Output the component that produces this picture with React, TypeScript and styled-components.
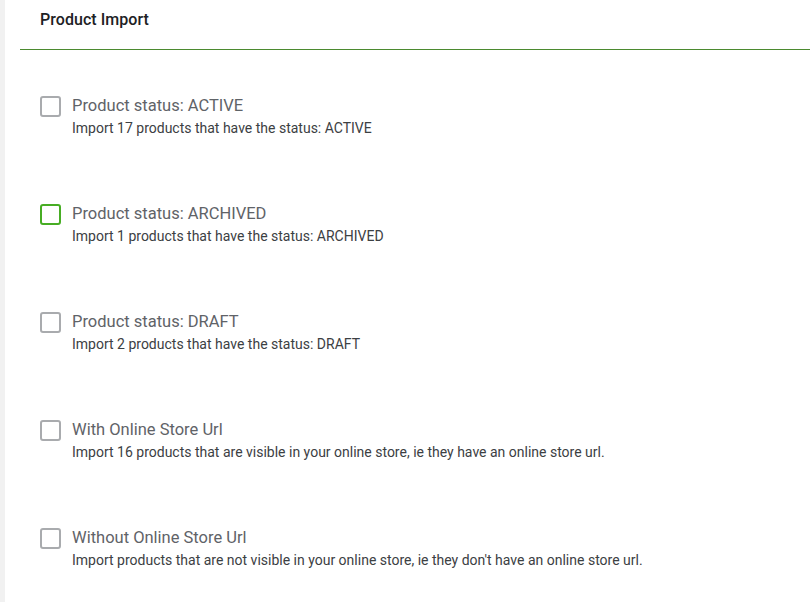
import React from "react";
import styled, { createGlobalStyle } from "styled-components";

const Global = createGlobalStyle`
  html, body { margin: 0; padding: 0; background: #fff; }
  body { font-family: Roboto, "Liberation Sans", Arial, sans-serif; }
`;

const Page = styled.div`
  display: flex;
  min-height: 602px;
`;

const SideStrip = styled.div`
  width: 5px;
  flex: 0 0 5px;
  background: #f1f1f1;
`;

const Main = styled.div`
  flex: 1;
  display: flex;
  flex-direction: column;
`;

const Header = styled.div`
  height: 50px;
  display: flex;
  align-items: center;
  padding-bottom: 10px;
  box-sizing: border-box;
  border-bottom: 1px solid #4b8a2f;
  margin-left: 15px;
  padding-left: 20px;
`;

const Title = styled.h1`
  margin: 0;
  font-size: 16px;
  font-weight: 500;
  color: #202124;
  line-height: 20px;
  letter-spacing: 0.05px;
`;

const List = styled.div`
  display: flex;
  flex-direction: column;
  gap: 67px;
  padding: 46px 0 0 35px;
`;

const Row = styled.label`
  display: flex;
  align-items: flex-start;
  gap: 11px;
  cursor: pointer;
`;

const Box = styled.span<{ $focused?: boolean }>`
  display: block;
  width: 21px;
  height: 21px;
  box-sizing: border-box;
  border: 2px solid ${(p) => (p.$focused ? "#47ad24" : "#a9abae")};
  border-radius: 3px;
  flex: 0 0 auto;
`;

const TextCol = styled.div`
  display: flex;
  flex-direction: column;
`;

const Label = styled.div`
  font-size: 16.5px;
  line-height: 20px;
  color: #5f6368;
`;

const Desc = styled.div`
  font-size: 14px;
  line-height: 18px;
  margin-top: 3px;
  color: #3c4043;
`;

const options = [
  { label: "Product status: ACTIVE", desc: "Import 17 products that have the status: ACTIVE" },
  { label: "Product status: ARCHIVED", desc: "Import 1 products that have the status: ARCHIVED", focused: true },
  { label: "Product status: DRAFT", desc: "Import 2 products that have the status: DRAFT" },
  { label: "With Online Store Url", desc: "Import 16 products that are visible in your online store, ie they have an online store url." },
  { label: "Without Online Store Url", desc: "Import products that are not visible in your online store, ie they don't have an online store url." },
];

export default function App() {
  return (
    <>
      <Global />
      <Page>
        <SideStrip />
        <Main>
          <Header>
            <Title>Product Import</Title>
          </Header>
          <List>
            {options.map((o) => (
              <Row key={o.label}>
                <Box $focused={o.focused} />
                <TextCol>
                  <Label>{o.label}</Label>
                  <Desc>{o.desc}</Desc>
                </TextCol>
              </Row>
            ))}
          </List>
        </Main>
      </Page>
    </>
  );
}
